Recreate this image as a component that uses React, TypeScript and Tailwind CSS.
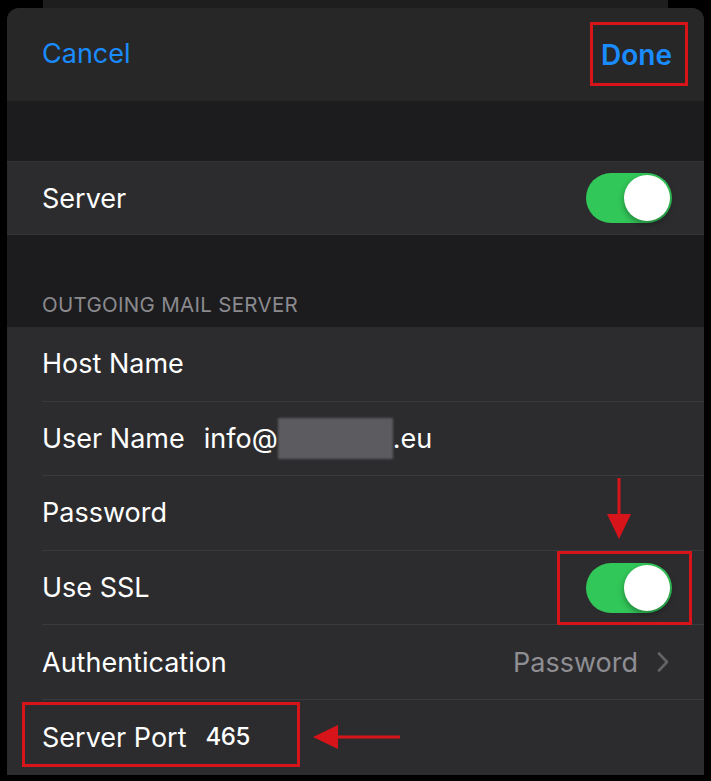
import clsx from "clsx";

const font = { fontFamily: "Inter, 'Noto Sans', sans-serif" };

function Toggle() {
  return (
    <div className="w-[86px] h-[50px] rounded-full bg-[#32c759] flex items-center justify-end pr-[2px]">
      <div className="w-[46px] h-[46px] rounded-full bg-white shadow-[0_3px_6px_rgba(0,0,0,0.35)]" />
    </div>
  );
}

function Row({
  label,
  children,
  last,
}: {
  label: string;
  children?: React.ReactNode;
  last?: boolean;
}) {
  return (
    <div className="pl-[35px] bg-[#2c2c2e]">
      <div
        className={clsx(
          "flex items-center h-[74.6px] pr-[32px]",
          !last && "border-b border-[#3a3a3d]"
        )}
      >
        <span className="text-white text-[27px] leading-none">{label}</span>
        {children}
      </div>
    </div>
  );
}

export default function App() {
  return (
    <div className="relative w-[711px] h-[781px] bg-black overflow-hidden" style={font}>
      <div className="mx-[43px] h-[8px] bg-[#1e1e1f]" />
      <div className="mx-[7px] rounded-t-[12px] overflow-hidden bg-[#1c1c1e]">
        {/* nav */}
        <div className="h-[93px] bg-[#272727] flex items-center justify-between pl-[35px] pr-[32px]">
          <span className="text-[#1a8cff] text-[27px]">Cancel</span>
          <span className="text-[#1a8cff] text-[28px] font-semibold">Done</span>
        </div>

        <div className="h-[60px]" />
        <div className="pl-[35px] pr-[32px] h-[74px] bg-[#2c2c2e] border-y border-[#333336] flex items-center justify-between">
          <span className="text-white text-[27px] leading-none">Server</span>
          <Toggle />
        </div>

        <div className="h-[92px] flex items-end pl-[35px] pb-[12px]">
          <span className="text-[#8a8a8f] text-[20.5px] tracking-[0.3px] leading-none">
            OUTGOING MAIL SERVER
          </span>
        </div>

        <Row label="Host Name" />
        <Row label="User Name">
          <span className="ml-[19px] text-white text-[27px] leading-none flex items-center">
            info@
            <span className="inline-block w-[115px] h-[41px] bg-[#5c5c60] blur-[1px]" />
            .eu
          </span>
        </Row>
        <Row label="Password" />
        <Row label="Use SSL">
          <div className="ml-auto">
            <Toggle />
          </div>
        </Row>
        <Row label="Authentication">
          <span className="ml-auto text-[#8e8e93] text-[27px] leading-none">Password</span>
          <svg className="ml-[19px] mr-[3px]" width="12" height="20" viewBox="0 0 12 20">
            <path d="M2 1.5 L10 10 L2 18.5" fill="none" stroke="#636366" strokeWidth="2.6" strokeLinecap="round" strokeLinejoin="round" />
          </svg>
        </Row>
        <Row label="Server Port" last>
          <span className="ml-[19px] text-white text-[24px] font-medium tracking-[-0.5px] leading-none">465</span>
        </Row>
      </div>

      {/* annotations */}
      <div className="absolute left-[590px] top-[22px] w-[98px] h-[64px] border-[3px] border-[#d7141a]" />
      <div className="absolute left-[557px] top-[551px] w-[135px] h-[74px] border-[3px] border-[#d7141a]" />
      <div className="absolute left-[22px] top-[702px] w-[278px] h-[65px] border-[3px] border-[#d7141a]" />
      <svg className="absolute left-0 top-0" width="711" height="781" viewBox="0 0 711 781">
        <line x1="619" y1="478" x2="619" y2="516" stroke="#d7141a" strokeWidth="3" />
        <polygon points="607,514 631,514 619,539" fill="#d7141a" />
        <line x1="400" y1="737" x2="336" y2="737" stroke="#d7141a" strokeWidth="3" />
        <polygon points="338,725 338,749 313,737" fill="#d7141a" />
      </svg>
    </div>
  );
}
